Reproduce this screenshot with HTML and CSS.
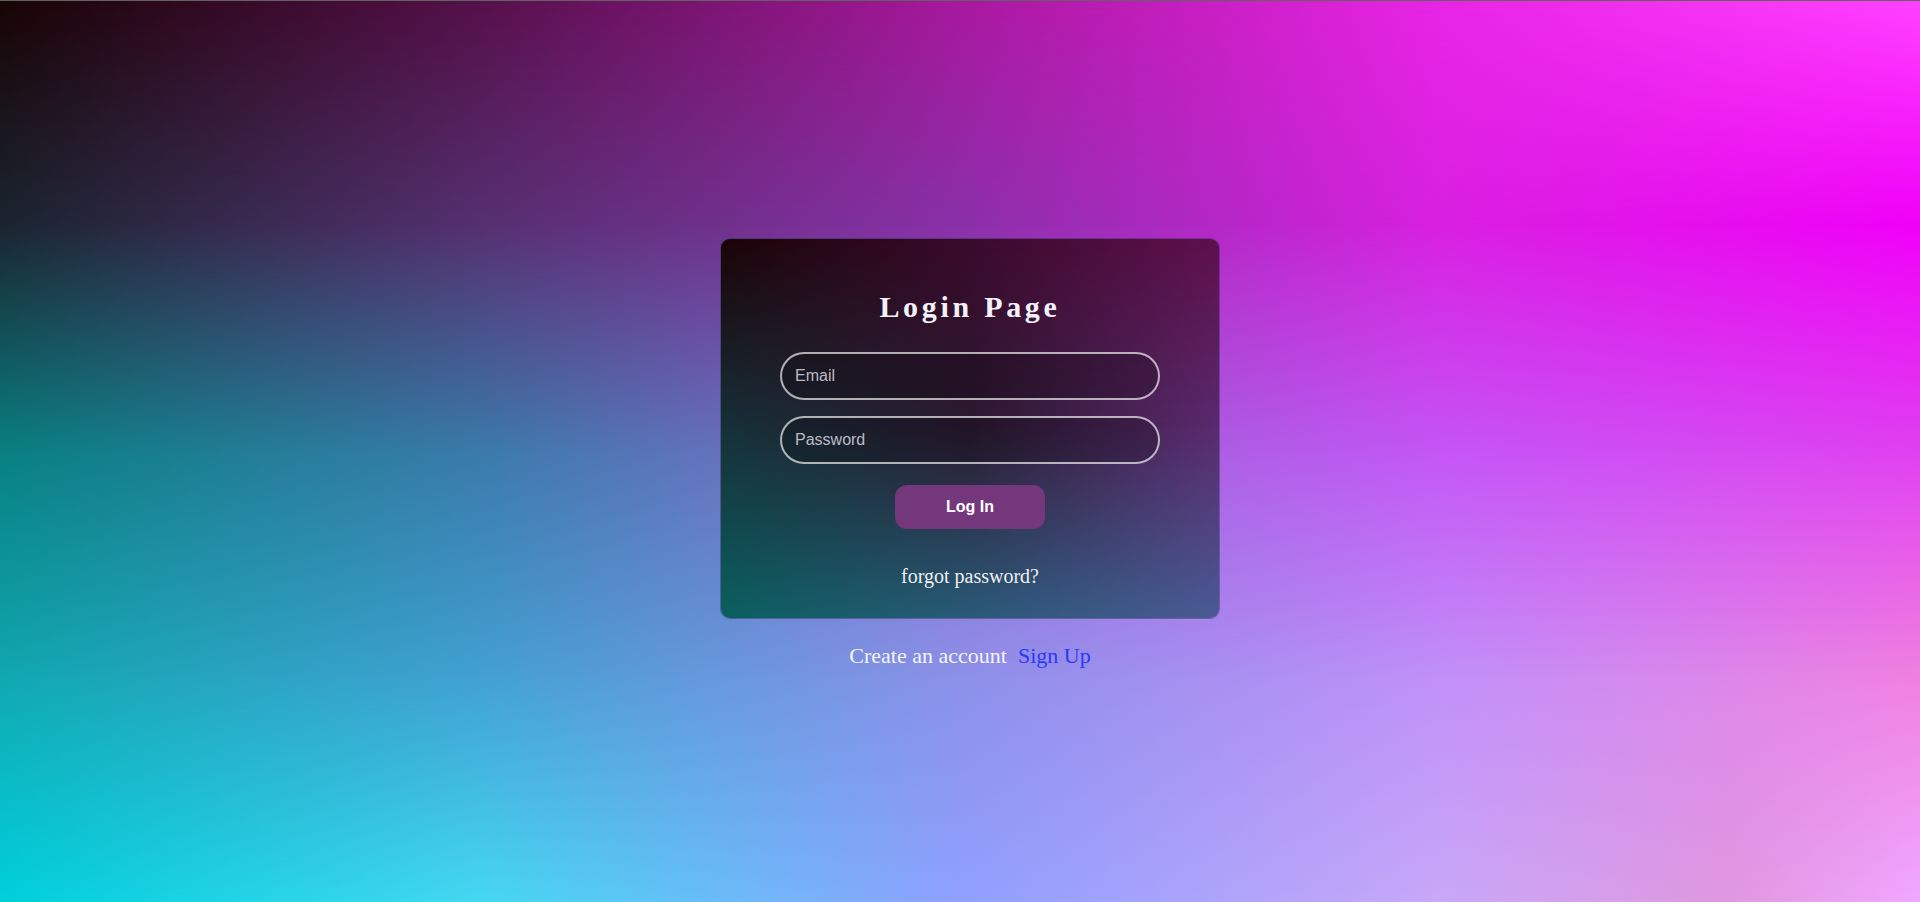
FILE: index.html
```html
<!DOCTYPE html>
<html lang="en">
<head>
<meta charset="utf-8">
<title>Login Page</title>
<link rel="stylesheet" href="styles.css">
</head>
<body>
<div class="page">
  <div class="mesh page-mesh">
    <div class="row r4"></div>
    <div class="row r3"></div>
    <div class="row r2"></div>
    <div class="row r1"></div>
    <div class="row r0"></div>
  </div>
  <main class="content">
    <section class="card">
      <div class="mesh card-mesh">
        <div class="row c2"></div>
        <div class="row c1"></div>
        <div class="row c0"></div>
      </div>
      <form class="card-body">
        <h1 class="title">Login Page</h1>
        <input class="field" type="email" placeholder="Email">
        <input class="field" type="password" placeholder="Password">
        <button class="btn" type="button">Log In</button>
        <a class="forgot" href="#">forgot password?</a>
      </form>
    </section>
    <p class="signup"><span>Create an account</span><a class="signup-link" href="#">Sign Up</a></p>
  </main>
</div>
</body>
</html>
```

FILE: styles.css
```css
* { box-sizing: border-box; }

html, body {
  margin: 0;
  padding: 0;
  height: 100%;
}

body {
  font-family: "Liberation Serif", "Times New Roman", serif;
  border-top: 1px solid #626262;
}

.page {
  display: grid;
  min-height: 901px;
  height: 100%;
}

.page > * {
  grid-area: 1 / 1;
}

.mesh {
  display: grid;
  width: 100%;
  height: 100%;
  isolation: isolate;
}

.mesh > .row {
  grid-area: 1 / 1;
}

/* page background mesh: rows at 0, 25, 50, 75, 100% */
.r4 {
  background: linear-gradient(to right, #00d0dc 0%, #45d8f2 25%, #90a0ff 50%, #c8a8f8 75%, #e098e0 90%, #f0a8ff 100%);
}
.r3 {
  background: linear-gradient(to right, #10a8b0 0%, #42a0d2 25%, #8c90e8 50%, #c090f8 75%, #f080e0 100%);
  -webkit-mask-image: linear-gradient(to bottom, #000 75%, transparent 100%);
  mask-image: linear-gradient(to bottom, #000 75%, transparent 100%);
}
.r2 {
  background: linear-gradient(to right, #087f80 0%, #3a7aaa 25%, #9068d0 50%, #c455f5 75%, #e040f0 100%);
  -webkit-mask-image: linear-gradient(to bottom, #000 50%, transparent 75%);
  mask-image: linear-gradient(to bottom, #000 50%, transparent 75%);
}
.r1 {
  background: linear-gradient(to right, #1a2530 0%, #553070 25%, #8a30a8 50%, #d820e0 75%, #f000f8 100%);
  -webkit-mask-image: linear-gradient(to bottom, #000 25%, transparent 50%);
  mask-image: linear-gradient(to bottom, #000 25%, transparent 50%);
}
.r0 {
  background: linear-gradient(to right, #180404 0%, #55104a 25%, #a8189e 50%, #e825e5 75%, #ff40ff 100%);
  -webkit-mask-image: linear-gradient(to bottom, #000 0%, transparent 25%);
  mask-image: linear-gradient(to bottom, #000 0%, transparent 25%);
}

.content {
  position: relative;
  display: flex;
  flex-direction: column;
  align-items: center;
  justify-content: center;
  padding-left: 20px;
  padding-top: 2px;
}

.card {
  width: 500px;
  height: 381px;
  border: 1px solid rgba(40, 50, 90, 0.45);
  border-radius: 10px;
  overflow: hidden;
  display: grid;
}

.card > * {
  grid-area: 1 / 1;
}

/* card mesh: rows at 0, 50, 100% */
.c2 {
  background: linear-gradient(to right, #0a6060 0%, #2a5a78 50%, #4a5a94 100%);
}
.c1 {
  background: linear-gradient(to right, #163038 0%, #2a1a30 50%, #5a2a6e 100%);
  -webkit-mask-image: linear-gradient(to bottom, #000 50%, transparent 100%);
  mask-image: linear-gradient(to bottom, #000 50%, transparent 100%);
}
.c0 {
  background: linear-gradient(to right, #1a0306 0%, #3a0a2c 50%, #5e104c 100%);
  -webkit-mask-image: linear-gradient(to bottom, #000 0%, transparent 50%);
  mask-image: linear-gradient(to bottom, #000 0%, transparent 50%);
}

.card-body {
  position: relative;
  display: flex;
  flex-direction: column;
  align-items: center;
  padding: 51px 0 30px;
  margin: 0;
}

.title {
  margin: 0 0 28px;
  font-family: "Liberation Serif", "Times New Roman", serif;
  font-size: 30px;
  font-weight: bold;
  line-height: 34px;
  letter-spacing: 3.7px;
  color: #f2f2fa;
}

.field {
  width: 380px;
  height: 48px;
  margin: 0 0 16px;
  padding: 0 0 0 13px;
  border: 2px solid rgba(255, 255, 255, 0.66);
  border-radius: 24px;
  background: rgba(0, 0, 0, 0.2);
  font-family: "Liberation Sans", Arial, sans-serif;
  font-size: 16px;
  color: #e8e8ee;
  outline: none;
}

.field:last-of-type {
  margin-bottom: 0;
}

.field::placeholder {
  color: #bdbac4;
}

.btn {
  margin-top: 21px;
  width: 150px;
  height: 44px;
  border: none;
  border-radius: 12px;
  background: #74377c;
  color: #ffffff;
  font-family: "Liberation Sans", Arial, sans-serif;
  font-size: 16px;
  font-weight: bold;
  cursor: pointer;
}

.forgot {
  margin-top: 36px;
  font-family: "Liberation Serif", "Times New Roman", serif;
  font-size: 20px;
  line-height: 23px;
  color: #f0f0f2;
  text-decoration: none;
}

.signup {
  display: flex;
  gap: 11px;
  margin: 24px 0 0;
  font-family: "Liberation Serif", "Times New Roman", serif;
  font-size: 22px;
  line-height: 25px;
  color: #f4f4f8;
}

.signup-link {
  color: #2b3bf5;
  text-decoration: none;
}
```
